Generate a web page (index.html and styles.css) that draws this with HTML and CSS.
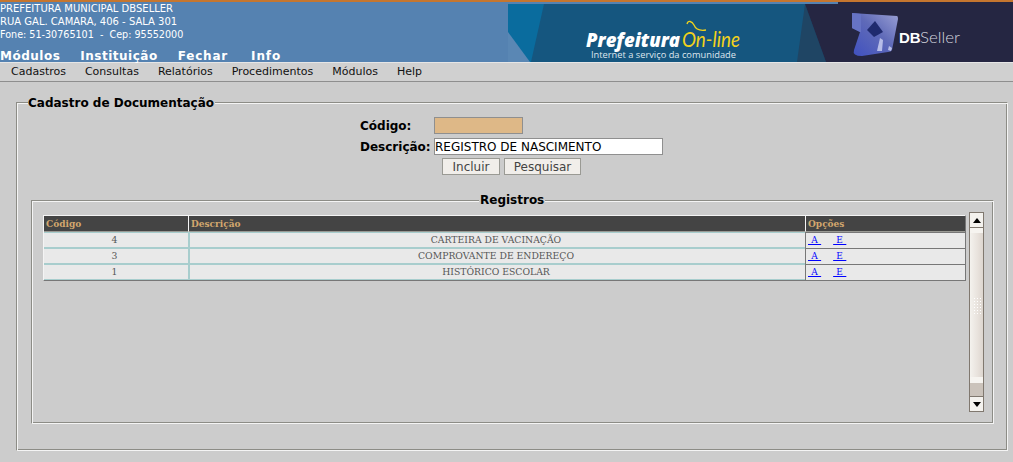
FILE: index.html
```html
<!doctype html>
<html lang="pt">
<head>
  <meta charset="utf-8">
  <title>Cadastro de Documentação</title>
  <link rel="stylesheet" href="styles.css">
</head>
<body>

  <header class="topo">
    <div class="topo-esq">
      <div class="endereco">
        <div>PREFEITURA MUNICIPAL DBSELLER</div>
        <div>RUA GAL. CAMARA, 406 - SALA 301</div>
        <div class="fone">Fone: 51-30765101 &nbsp;-&nbsp; Cep: 95552000</div>
      </div>
      <nav class="menu-topo">
        <a>Módulos</a>
        <a>Instituição</a>
        <a class="fechar">Fechar</a>
        <a class="info">Info</a>
      </nav>
    </div>
    <svg class="banner" width="505" height="60" viewBox="0 0 505 60">
      <defs>
        <linearGradient id="cubo" x1="0" y1="1" x2="1" y2="0">
          <stop offset="0" stop-color="#3f50c0"/>
          <stop offset="0.55" stop-color="#5f6ab8"/>
          <stop offset="1" stop-color="#9aa0d4"/>
        </linearGradient>
      </defs>
      <rect x="0" y="2" width="330" height="58" fill="#15567f"/>
      <polygon points="0,2 36,2 23,60 0,60" fill="#0a6c9e"/>
      <polygon points="0,30 22,60 0,60" fill="#5a87b4"/>
      <polygon points="297,2 318,60 289,60" fill="#1f4564"/>
      <polygon points="297,2 330,2 330,0 505,0 505,60 318,60" fill="#252642"/>
      <text class="b-pref" x="78" y="45" textLength="94" lengthAdjust="spacingAndGlyphs">Prefeitura</text>
      <text class="b-online" x="174" y="45" textLength="58" lengthAdjust="spacingAndGlyphs">On-line</text>
      <path d="M179 22 C180 18 184 19 186 23 C188 28 192 29 198 28" fill="none" stroke="#f2d21b" stroke-width="1.3"/>
      <text class="b-sub" x="83" y="56" textLength="145" lengthAdjust="spacingAndGlyphs">Internet a serviço da comunidade</text>
      <path d="M344 11 L389 14 Q390 14 390 17 L384 48 Q383 50 380 50 L354 54 Q344 54 346 48 L352 30 L344 26 Z" fill="url(#cubo)"/>
      <path d="M344 11 L353 12 L353 30 L352 30 L344 26 Z" fill="#6673c4"/>
      <path d="M367 19 L375 30 L366 35 L359 28 Z" fill="#1f2a6e"/>
      <path d="M369 49 L372 36 L375 38 L374 49 Z" fill="#b7bde8"/>
      <path d="M380 48 L381 44 L384 46 L383 49 Z" fill="#b7bde8"/>
      <text class="b-db" x="391" y="41">DB</text>
      <text class="b-seller" x="412" y="41" textLength="40" lengthAdjust="spacingAndGlyphs">Seller</text>
    </svg>
  </header>

  <nav class="menu">
    <a>Cadastros</a>
    <a>Consultas</a>
    <a>Relatórios</a>
    <a>Procedimentos</a>
    <a>Módulos</a>
    <a>Help</a>
  </nav>

  <main class="conteudo">
    <fieldset class="quadro">
      <legend>Cadastro de Documentação</legend>

      <form class="form">
        <label class="campo">
          <span class="rotulo">Código:</span>
          <input class="codigo" type="text" readonly>
        </label>
        <label class="campo">
          <span class="rotulo">Descrição:</span>
          <input class="descricao" type="text" value="REGISTRO DE NASCIMENTO">
        </label>
        <div class="botoes">
          <button class="incluir" type="button">Incluir</button>
          <button class="pesquisar" type="button">Pesquisar</button>
        </div>
      </form>

      <fieldset class="registros">
        <legend>Registros</legend>
        <div class="lista">
          <table class="tabela">
            <thead>
              <tr>
                <th class="col-cod">Código</th>
                <th class="col-desc">Descrição</th>
                <th class="col-op">Opções</th>
              </tr>
            </thead>
            <tbody>
              <tr>
                <td>4</td>
                <td>CARTEIRA DE VACINAÇÃO</td>
                <td class="opcoes"><a href="#">&nbsp;A&nbsp;</a><a href="#">&nbsp;E&nbsp;</a></td>
              </tr>
              <tr>
                <td>3</td>
                <td>COMPROVANTE DE ENDEREÇO</td>
                <td class="opcoes"><a href="#">&nbsp;A&nbsp;</a><a href="#">&nbsp;E&nbsp;</a></td>
              </tr>
              <tr>
                <td>1</td>
                <td>HISTÓRICO ESCOLAR</td>
                <td class="opcoes"><a href="#">&nbsp;A&nbsp;</a><a href="#">&nbsp;E&nbsp;</a></td>
              </tr>
            </tbody>
          </table>

          <div class="rolagem">
            <div class="seta seta-cima"></div>
            <div class="barra">
              <div class="grip"></div>
            </div>
            <div class="trilho"></div>
            <div class="seta seta-baixo"></div>
          </div>
        </div>
      </fieldset>
    </fieldset>
  </main>

</body>
</html>
```

FILE: styles.css
```css
html {
  height: 100%;
}

body {
  margin: 0;
  height: 462px;
  overflow: hidden;
  background-color: #cccccc;
  color: #000;
  font-family: "DejaVu Sans", sans-serif;
}

/* topo */

.topo {
  height: 60px;
  border-top: 2px solid #c5762f;
  background-color: #5582b1;
  display: flex;
  justify-content: space-between;
  color: #fff;
}

.topo-esq {
  display: flex;
  flex-direction: column;
  justify-content: space-between;
}

.endereco {
  font-size: 10px;
  line-height: 13px;
}

.fone {
  font-size: 9.6px;
}

.menu-topo {
  display: flex;
  gap: 20px;
  font-size: 12px;
  font-weight: bold;
  letter-spacing: 0.5px;
  line-height: 12px;
}

.fechar {
  letter-spacing: 0.8px;
}

.info {
  margin-left: 3px;
  letter-spacing: 0.9px;
}

.banner {
  display: block;
  flex: none;
}

.b-pref {
  font: italic 800 19px "Open Sans", sans-serif;
  fill: #fff;
}

.b-online {
  font: italic 400 21px "Lato", sans-serif;
  fill: #f2d21b;
}

.b-sub {
  font: 9px "Open Sans", sans-serif;
  fill: #dfe6ee;
}

.b-db {
  font: bold 15px "Liberation Sans", sans-serif;
  fill: #fff;
}

.b-seller {
  font: 300 15px "Lato", sans-serif;
  fill: #d4d5df;
}

/* menu */

.menu {
  height: 18px;
  border-top: 1px solid #e6e6e6;
  border-bottom: 1px solid #8e8e8e;
  background-color: #d0d0d0;
  display: flex;
  gap: 19px;
  padding-left: 11px;
  font-size: 11px;
  line-height: 18px;
  color: #111;
}

/* quadros */

.conteudo {
  padding: 12px 5px 0 16px;
}

fieldset {
  margin: 0;
  border-width: 1px;
  border-style: solid;
  border-color: #8c8c86 #f4f4f4 #f4f4f4 #8c8c86;
  box-shadow: inset 1px 1px 0 #f4f4f4, inset -1px -1px 0 #8c8c86;
}

legend {
  background-color: #cccccc;
}

.quadro {
  height: 357px;
  box-sizing: border-box;
  padding: 0 13px 0 14px;
}

.quadro > legend {
  font-size: 12px;
  font-weight: bold;
  line-height: 15px;
  padding: 2px 1px 0 0;
  margin-left: -3px;
}

.form {
  display: flex;
  flex-direction: column;
  align-items: flex-start;
  padding-top: 6px;
  padding-left: 329px;
  gap: 3px;
}

.campo {
  display: flex;
  align-items: center;
  gap: 4px;
  font-size: 12px;
  font-weight: bold;
}

.rotulo {
  width: 70px;
}

.campo input {
  box-sizing: border-box;
  height: 17px;
  padding: 0;
  border: 1px solid #8f8f8f;
  font: 12px "DejaVu Sans", sans-serif;
  color: #000;
  outline: none;
}

.codigo {
  width: 89px;
  margin-bottom: 1px;
  background-color: #deb887;
}

.descricao {
  width: 229px;
  background-color: #fff;
}

.botoes {
  display: flex;
  gap: 4px;
  padding-left: 82px;
}

.botoes button {
  height: 17px;
  padding: 0;
  border: 1px solid #9a9a94;
  background-color: #f1eeea;
  font: 12px "DejaVu Sans", sans-serif;
  color: #444;
}

.incluir {
  width: 58px;
}

.pesquisar {
  width: 77px;
}

.registros {
  height: 231px;
  box-sizing: border-box;
  margin-top: 18px;
  padding: 0 9px 0 11px;
}

.registros > legend {
  margin-left: 436px;
  font-size: 12px;
  font-weight: bold;
  line-height: 15px;
  padding: 0 1px;
}

/* tabela */

.lista {
  display: flex;
  align-items: flex-start;
  justify-content: space-between;
  padding-top: 4px;
}

.tabela {
  width: 923px;
  margin-top: 3px;
  table-layout: fixed;
  border-collapse: separate;
  border-spacing: 0;
  font: 9px "DejaVu Serif", serif;
  border-top: 1px solid #f4f4f4;
  border-left: 1px solid #f4f4f4;
  border-right: 1px solid #777;
  border-bottom: 1px solid #777;
}

.col-cod {
  width: 144px;
}

.col-op {
  width: 160px;
}

.tabela th {
  height: 16px;
  padding: 0 2px;
  text-align: left;
  background-color: #444444;
  color: #d2a76e;
  font-weight: bold;
  border-left: 1px solid #f4f4f4;
  border-bottom: 1px solid #9a9a94;
  box-sizing: border-box;
}

.tabela th:first-child,
.tabela td:first-child {
  border-left: 0;
}

.tabela td {
  height: 16px;
  box-sizing: border-box;
  padding: 0 3px 2px 0;
  text-align: center;
  font-size: 9.25px;
  background-color: #e9e9e9;
  color: #555;
  border-left: 2px solid #a8cdcd;
  border-top: 1px solid #a8cdcd;
  border-bottom: 1px solid #a8cdcd;
}

.tabela td.opcoes {
  text-align: left;
  padding-left: 2px;
  font-size: 9px;
  border-left: 1px solid #777;
  border-top-color: #777;
  border-bottom: 0;
}

.opcoes a {
  color: #0000ff;
  letter-spacing: 0.3px;
  margin-right: 12px;
}

/* barra de rolagem */

.rolagem {
  width: 15px;
  height: 200px;
  box-sizing: border-box;
  border: 1px solid #80786f;
  display: flex;
  flex-direction: column;
  background-color: #cbc3bb;
}

.seta {
  height: 14px;
  flex: none;
  background-color: #f4f2ee;
  display: flex;
  justify-content: center;
  align-items: center;
}

.seta-cima {
  border-bottom: 1px solid #80786f;
}

.seta-baixo {
  border-top: 1px solid #80786f;
}

.seta::before {
  content: "";
  border-left: 4px solid transparent;
  border-right: 4px solid transparent;
}

.seta-cima::before {
  border-bottom: 5px solid #000;
}

.seta-baixo::before {
  border-top: 5px solid #000;
}

.barra {
  flex: 1;
  background: linear-gradient(to right, #f4f2ee, #e8e2dc 60%, #ddd6cf);
  border-top: 5px solid #f6f4f0;
  border-bottom: 6px solid #f6f4f0;
  display: flex;
  align-items: center;
  justify-content: center;
}

.grip {
  width: 8px;
  height: 17px;
  background-image: radial-gradient(#ffffff 1px, transparent 1px);
  background-size: 3px 3px;
}

.trilho {
  height: 13px;
  flex: none;
}
```
